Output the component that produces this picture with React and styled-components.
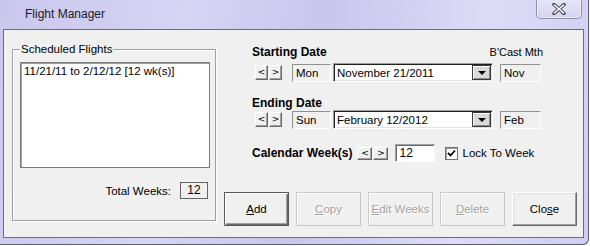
import React from 'react';
import styled, { createGlobalStyle, css } from 'styled-components';

const GlobalStyle = createGlobalStyle`
  html, body {
    margin: 0;
    padding: 0;
    background: #ffffff;
  }
  * {
    box-sizing: border-box;
  }
`;

const UI_FONT = `"Liberation Sans", Arial, sans-serif`;

// Window chrome
const Window = styled.div`
  width: 589px;
  height: 245px;
  display: flex;
  flex-direction: column;
  background: linear-gradient(100deg, #c9c7ec 0%, #d7d5f4 30%, #c8c6ec 52%, #dddbf7 78%, #d0cef1 100%);
  border-right: 1px solid #5e5e74;
  border-bottom: 1px solid #5e5e74;
  border-bottom-right-radius: 6px;
  font-family: ${UI_FONT};
`;

const TitleBar = styled.div`
  height: 29px;
  display: flex;
  justify-content: space-between;
  align-items: flex-start;
`;

const Title = styled.div`
  padding: 7px 0 0 25px;
  font-size: 12px;
  line-height: 14px;
  color: #1b1b1b;
`;

const CloseButton = styled.div`
  width: 46px;
  height: 19px;
  margin-right: 6px;
  display: flex;
  align-items: center;
  justify-content: center;
  border: 1px solid #8d8cab;
  border-top: none;
  border-radius: 0 0 5px 5px;
  background: linear-gradient(#e6e5f8, #d4d3ef);
  box-shadow: inset 1px 0 0 rgba(255, 255, 255, 0.6), inset -1px -1px 0 rgba(255, 255, 255, 0.6);
`;

const Client = styled.div`
  margin: 0 4px 0 3px;
  height: 209px;
  display: flex;
  align-items: flex-start;
  background: #f0f0f0;
  border: 1px solid #6c6c7c;
`;

// Left group box
const GroupBox = styled.div`
  position: relative;
  width: 204px;
  height: 172px;
  margin: 19px 0 0 8px;
  padding: 12px 0 0 7px;
  border: 1px solid #a0a0a0;
  box-shadow: inset 1px 1px 0 #ffffff, 1px 1px 0 #ffffff;
`;

const GroupLegend = styled.span`
  position: absolute;
  top: -8px;
  left: 7px;
  padding: 0 1px;
  background: #f0f0f0;
  font-size: 11.5px;
  line-height: 14px;
  color: #000;
`;

const ListBox = styled.div`
  width: 190px;
  height: 106px;
  padding: 1px 3px;
  background: #ffffff;
  border: 1px solid #7a7a7a;
  box-shadow: inset 1px 1px 0 #a0a0a0;
  font-size: 11.5px;
  line-height: 14px;
  color: #000;
`;

const TotalRow = styled.div`
  display: flex;
  align-items: center;
  justify-content: flex-end;
  gap: 9px;
  width: 188px;
  margin-top: 14px;
  font-size: 11.5px;
`;

const TotalBox = styled.div`
  width: 28px;
  height: 17px;
  border: 1px solid #646464;
  font-size: 12px;
  line-height: 15px;
  text-align: center;
`;

// Right panel
const Panel = styled.div`
  margin-left: 8px;
  padding-top: 15px;
  display: flex;
  flex-direction: column;
`;

const HeaderRow = styled.div`
  display: flex;
  justify-content: space-between;
  width: 319px;
  padding-left: 28px;
  margin-top: ${(p) => p.$top || 0}px;
`;

const BoldLabel = styled.span`
  font-size: 12px;
  font-weight: bold;
  line-height: 14px;
  color: #000;
  white-space: nowrap;
`;

const SmallLabel = styled.span`
  font-size: 11px;
  line-height: 14px;
  color: #000;
`;

const DateRow = styled.div`
  display: flex;
  align-items: center;
  height: 19px;
  padding-left: 31px;
  margin-top: ${(p) => p.$top || 0}px;
`;

const Spinner = styled.div`
  display: flex;
  gap: 1px;
  margin-left: ${(p) => p.$left || 0}px;
`;

const raised = css`
  border: 1px solid;
  border-color: #ffffff #696969 #696969 #ffffff;
  box-shadow: inset -1px -1px 0 #a0a0a0;
  background: #f0f0f0;
`;

const ArrowButton = styled.div`
  ${raised};
  width: ${(p) => p.$w || 13}px;
  height: ${(p) => p.$h || 15}px;
  display: flex;
  align-items: center;
  justify-content: center;
  font-family: "DejaVu Sans", sans-serif;
  font-size: 9px;
  line-height: 1;
  color: #000;
`;

const sunken = css`
  border: 1px solid;
  border-color: #8f8f8f #ffffff #ffffff #8f8f8f;
`;

const ReadBox = styled.div`
  ${sunken};
  width: ${(p) => p.$w}px;
  height: 18px;
  margin-left: ${(p) => p.$left}px;
  padding-left: 3px;
  font-size: 11.5px;
  line-height: 16px;
  color: #000;
  background: #f0f0f0;
`;

const Combo = styled.div`
  width: 160px;
  height: 19px;
  margin-left: 2px;
  display: flex;
  align-items: center;
  justify-content: space-between;
  padding: 0 1px 0 3px;
  background: #ffffff;
  border: 1px solid;
  border-color: #a0a0a0 #ffffff #ffffff #a0a0a0;
  box-shadow: inset 1px 1px 0 #1e1e1e, inset -1px -1px 0 #e3e3e3;
  font-size: 11.5px;
  color: #000;
`;

const DropButton = styled.div`
  width: 19px;
  height: 15px;
  display: flex;
  align-items: center;
  justify-content: center;
  background: #d9d9d9;
  border: 1px solid #3a3a3a;
  box-shadow: inset 1px 1px 0 #ffffff, inset -1px -1px 0 #8a8a8a;

  &::after {
    content: '';
    border-left: 4px solid transparent;
    border-right: 4px solid transparent;
    border-top: 4px solid #000;
  }
`;

const WeekRow = styled.div`
  display: flex;
  align-items: center;
  height: 18px;
  padding-left: 28px;
  margin-top: 15px;
`;

const WeekInput = styled.div`
  width: 40px;
  height: 18px;
  margin-left: 7px;
  padding-left: 3px;
  background: #ffffff;
  border: 1px solid;
  border-color: #a0a0a0 #ffffff #ffffff #a0a0a0;
  box-shadow: inset 1px 1px 0 #696969;
  font-size: 12px;
  line-height: 16px;
`;

const CheckLabel = styled.label`
  display: flex;
  align-items: center;
  gap: 4px;
  margin-left: 10px;
  font-size: 11.5px;
  color: #000;
`;

const CheckBox = styled.span`
  width: 13px;
  height: 13px;
  display: flex;
  align-items: center;
  justify-content: center;
  background: #ffffff;
  border: 1px solid #707070;
  box-shadow: inset 1px 1px 0 #a0a0a0;
`;

const ButtonRow = styled.div`
  display: flex;
  gap: 7px;
  margin-top: 30px;
`;

const PushButton = styled.div`
  width: 65px;
  height: 34px;
  display: flex;
  align-items: center;
  justify-content: center;
  font-size: 11.5px;
  background: #f0f0f0;
  ${(p) =>
    p.$default
      ? css`
          color: #000;
          border: 1px solid #5a5a5a;
          box-shadow: inset 1px 1px 0 #ffffff, inset -1px -1px 0 #696969, inset -2px -2px 0 #a0a0a0;
        `
      : p.$disabled
      ? css`
          color: #a3a3a3;
          text-shadow: 1px 1px 0 #ffffff;
          border: 1px solid #c9c9c9;
          box-shadow: inset 1px 1px 0 #ffffff;
        `
      : css`
          color: #000;
          border: 1px solid;
          border-color: #ffffff #696969 #696969 #ffffff;
          box-shadow: inset -1px -1px 0 #a0a0a0, inset 1px 1px 0 #e3e3e3;
        `}

  u {
    text-decoration: underline;
    text-underline-offset: 1px;
  }
`;

const CloseGlyph = () => (
  <svg width="14" height="12" viewBox="0 0 14 12">
    <path d="M2 1.5 L12 10.5 M12 1.5 L2 10.5" stroke="#4a4a5e" strokeWidth="3.6" strokeLinecap="round" />
    <path d="M2.4 2 L11.6 10 M11.6 2 L2.4 10" stroke="#ffffff" strokeWidth="1.6" strokeLinecap="round" />
  </svg>
);

const CheckMark = () => (
  <svg width="9" height="9" viewBox="0 0 9 9">
    <path d="M1 4 L3.5 6.5 L8 1.5" fill="none" stroke="#000" strokeWidth="1.8" />
  </svg>
);

const dates = [
  { label: 'Starting Date', day: 'Mon', date: 'November 21/2011', month: 'Nov', top: 0 },
  { label: 'Ending Date', day: 'Sun', date: 'February 12/2012', month: 'Feb', top: 14 },
];

export default function App() {
  return (
    <>
      <GlobalStyle />
      <Window>
        <TitleBar>
          <Title>Flight Manager</Title>
          <CloseButton>
            <CloseGlyph />
          </CloseButton>
        </TitleBar>

        <Client>
          <GroupBox>
            <GroupLegend>Scheduled Flights</GroupLegend>
            <ListBox>11/21/11 to 2/12/12 [12 wk(s)]</ListBox>
            <TotalRow>
              <span>Total Weeks:</span>
              <TotalBox>12</TotalBox>
            </TotalRow>
          </GroupBox>

          <Panel>
            {dates.map((d, i) => (
              <React.Fragment key={d.label}>
                <HeaderRow $top={d.top}>
                  <BoldLabel>{d.label}</BoldLabel>
                  {i === 0 && <SmallLabel>B'Cast Mth</SmallLabel>}
                </HeaderRow>
                <DateRow $top={i === 0 ? 4 : 0}>
                  <Spinner>
                    <ArrowButton>&lt;</ArrowButton>
                    <ArrowButton>&gt;</ArrowButton>
                  </Spinner>
                  <ReadBox $w={39} $left={10}>{d.day}</ReadBox>
                  <Combo>
                    <span>{d.date}</span>
                    <DropButton />
                  </Combo>
                  <ReadBox $w={41} $left={7}>{d.month}</ReadBox>
                </DateRow>
              </React.Fragment>
            ))}

            <WeekRow>
              <BoldLabel>Calendar Week(s)</BoldLabel>
              <Spinner $left={5}>
                <ArrowButton $w={15} $h={13}>&lt;</ArrowButton>
                <ArrowButton $w={15} $h={13}>&gt;</ArrowButton>
              </Spinner>
              <WeekInput>12</WeekInput>
              <CheckLabel>
                <CheckBox>
                  <CheckMark />
                </CheckBox>
                Lock To Week
              </CheckLabel>
            </WeekRow>

            <ButtonRow>
              <PushButton $default>
                <span><u>A</u>dd</span>
              </PushButton>
              <PushButton $disabled>
                <span><u>C</u>opy</span>
              </PushButton>
              <PushButton $disabled>
                <span><u>E</u>dit Weeks</span>
              </PushButton>
              <PushButton $disabled>
                <span><u>D</u>elete</span>
              </PushButton>
              <PushButton>
                <span>Clo<u>s</u>e</span>
              </PushButton>
            </ButtonRow>
          </Panel>
        </Client>
      </Window>
    </>
  );
}
